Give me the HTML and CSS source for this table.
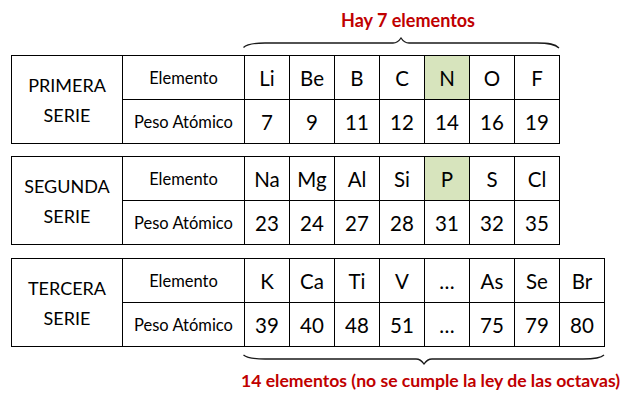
FILE: index.html
```html
<!DOCTYPE html>
<html lang="es">
<head>
<meta charset="utf-8">
<title>Ley de las octavas</title>
<link rel="stylesheet" href="styles.css">
</head>
<body>
<div class="sheet">
  <div class="label label-top">Hay 7 elementos</div>
  <svg class="brace brace-top" width="320" height="13" viewBox="0 0 320 13">
    <path d="M0.5 10.5 C4 7 10 6 22 6 L150 6 C154 6 156 4 158 1 C160 4 162 6 166 6 L294 6 C306 6 312 7 316 11" />
  </svg>

  <div class="series">
    <div class="name">PRIMERA<br>SERIE</div>
    <div class="head">Elemento</div>
    <div class="sym">Li</div><div class="sym">Be</div><div class="sym">B</div><div class="sym">C</div><div class="sym hl">N</div><div class="sym">O</div><div class="sym">F</div>
    <div class="head">Peso Atómico</div>
    <div class="num">7</div><div class="num">9</div><div class="num">11</div><div class="num">12</div><div class="num">14</div><div class="num">16</div><div class="num">19</div>
  </div>

  <div class="series s2">
    <div class="name">SEGUNDA<br>SERIE</div>
    <div class="head">Elemento</div>
    <div class="sym">Na</div><div class="sym">Mg</div><div class="sym">Al</div><div class="sym">Si</div><div class="sym hl">P</div><div class="sym">S</div><div class="sym">Cl</div>
    <div class="head">Peso Atómico</div>
    <div class="num">23</div><div class="num">24</div><div class="num">27</div><div class="num">28</div><div class="num">31</div><div class="num">32</div><div class="num">35</div>
  </div>

  <div class="series s3 wide">
    <div class="name">TERCERA<br>SERIE</div>
    <div class="head">Elemento</div>
    <div class="sym">K</div><div class="sym">Ca</div><div class="sym">Ti</div><div class="sym">V</div><div class="sym">…</div><div class="sym">As</div><div class="sym">Se</div><div class="sym">Br</div>
    <div class="head">Peso Atómico</div>
    <div class="num">39</div><div class="num">40</div><div class="num">48</div><div class="num">51</div><div class="num">…</div><div class="num">75</div><div class="num">79</div><div class="num">80</div>
  </div>

  <svg class="brace brace-bottom" width="364" height="13" viewBox="0 0 364 13">
    <path d="M0.5 2 C4 5 10 6 22 6 L173 6 C177 6 179 8 181 11 C183 8 185 6 189 6 L340 6 C352 6 358 5 361 2" />
  </svg>
  <div class="label label-bottom">14 elementos (no se cumple la ley de las octavas)</div>
</div>
</body>
</html>
```

FILE: styles.css
```css
* { box-sizing: border-box; }

html, body {
  margin: 0;
  padding: 0;
  background: #ffffff;
}

body {
  font-family: Lato, "Open Sans", "Liberation Sans", sans-serif;
  color: #000;
  width: 632px;
  height: 404px;
  overflow: hidden;
}

.sheet {
  padding-left: 11px;
}

.label {
  color: #c00000;
  font-weight: bold;
  white-space: nowrap;
}

.label-top {
  height: 37px;
  line-height: 40px;
  margin-left: 330px;
  font-size: 18px;
}

.label-bottom {
  height: 30px;
  line-height: 30px;
  margin-left: 230px;
  font-size: 17.6px;
}

.brace {
  display: block;
  fill: none;
  stroke: #1a1a1a;
  stroke-width: 1.3;
}

.brace-top {
  margin-left: 232px;
  margin-bottom: 5px;
}

.brace-bottom {
  margin-left: 232px;
  margin-top: 6px;
}

.series {
  display: grid;
  grid-template-columns: 111px 122px repeat(7, 45px);
  grid-template-rows: 44px 44px;
  width: max-content;
  border-left: 1px solid #000;
  border-top: 1px solid #000;
}

.series.wide {
  grid-template-columns: 111px 122px repeat(8, 45px);
}

.s2 { margin-top: 12px; }
.s3 { margin-top: 13px; }

.series > div {
  border-right: 1px solid #000;
  border-bottom: 1px solid #000;
  display: flex;
  align-items: center;
  justify-content: center;
  text-align: center;
}

.name {
  grid-row: span 2;
  font-size: 18px;
  line-height: 30px;
}

.head {
  font-size: 16.5px;
}

.sym, .num {
  font-size: 20.5px;
}

.hl {
  background: #d7e4bd;
}
```
